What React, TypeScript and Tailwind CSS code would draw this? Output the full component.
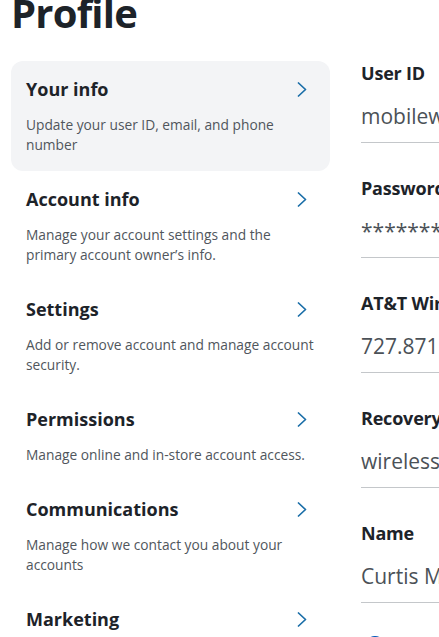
const ITEMS = [
  { title: "Your info", desc: "Update your user ID, email, and phone number", active: true },
  { title: "Account info", desc: "Manage your account settings and the primary account owner’s info." },
  { title: "Settings", desc: "Add or remove account and manage account security." },
  { title: "Permissions", desc: "Manage online and in-store account access." },
  { title: "Communications", desc: "Manage how we contact you about your accounts" },
  { title: "Marketing", desc: "Choose how we use your info for marketing" },
];

const FIELDS = [
  { label: "User ID", value: "mobilewireless.curtis@att.net" },
  { label: "Password", value: "**************" },
  { label: "AT&T Wireless number", value: "727.871.0000" },
  { label: "Recovery email", value: "wirelesscurtis@gmail.com" },
  { label: "Name", value: "Curtis Mobile" },
];

function Chevron() {
  return (
    <svg width="10" height="15" viewBox="0 0 10 15" fill="none" className="mr-[11px] shrink-0">
      <path d="M1.5 1 L8.5 7.5 L1.5 14" stroke="#1a6ea8" strokeWidth="1.7" strokeLinecap="round" strokeLinejoin="round" />
    </svg>
  );
}

function NavItem({ title, desc, active }: { title: string; desc: string; active?: boolean }) {
  return (
    <button className={`flex w-full flex-col rounded-xl pl-[15px] pr-[12px] pt-4 pb-4 text-left ${active ? "bg-[#f3f4f6]" : ""}`}>
      <div className="flex items-center justify-between">
        <span className="text-[18px] leading-6 font-bold text-[#1d2329]">{title}</span>
        <Chevron />
      </div>
      <p className="mt-[14px] text-[13.75px] leading-5 text-[#50565c]">{desc}</p>
    </button>
  );
}

export default function App() {
  return (
    <div className="h-[637px] w-[439px] overflow-hidden bg-white px-[11px] font-['Open_Sans',sans-serif]">
      <h1 className="-mt-[11px] text-[40px] leading-[48px] font-bold tracking-[-0.8px] text-[#1d2329]">Profile</h1>
      <div className="mt-6 flex gap-[31px]">
        <nav className="flex w-[319px] shrink-0 flex-col">
          {ITEMS.map((it) => (
            <NavItem key={it.title} {...it} />
          ))}
        </nav>
        <section className="flex w-[300px] shrink-0 flex-col">
          {FIELDS.map((f) => (
            <div key={f.label} className="mb-[33px] flex flex-col">
              <span className="text-[18px] leading-6 font-bold tracking-[-0.2px] whitespace-nowrap text-[#1d2329]">{f.label}</span>
              <span className="mt-4 text-[21px] leading-[30px] whitespace-nowrap text-[#4b5157]">{f.value}</span>
              <div className="mt-[11px] h-px w-full bg-[#c4c7ca]" />
            </div>
          ))}
          <div className="flex items-center gap-2 pl-1">
            <span className="size-5 rounded-full bg-[#0057b8]" />
          </div>
        </section>
      </div>
    </div>
  );
}
